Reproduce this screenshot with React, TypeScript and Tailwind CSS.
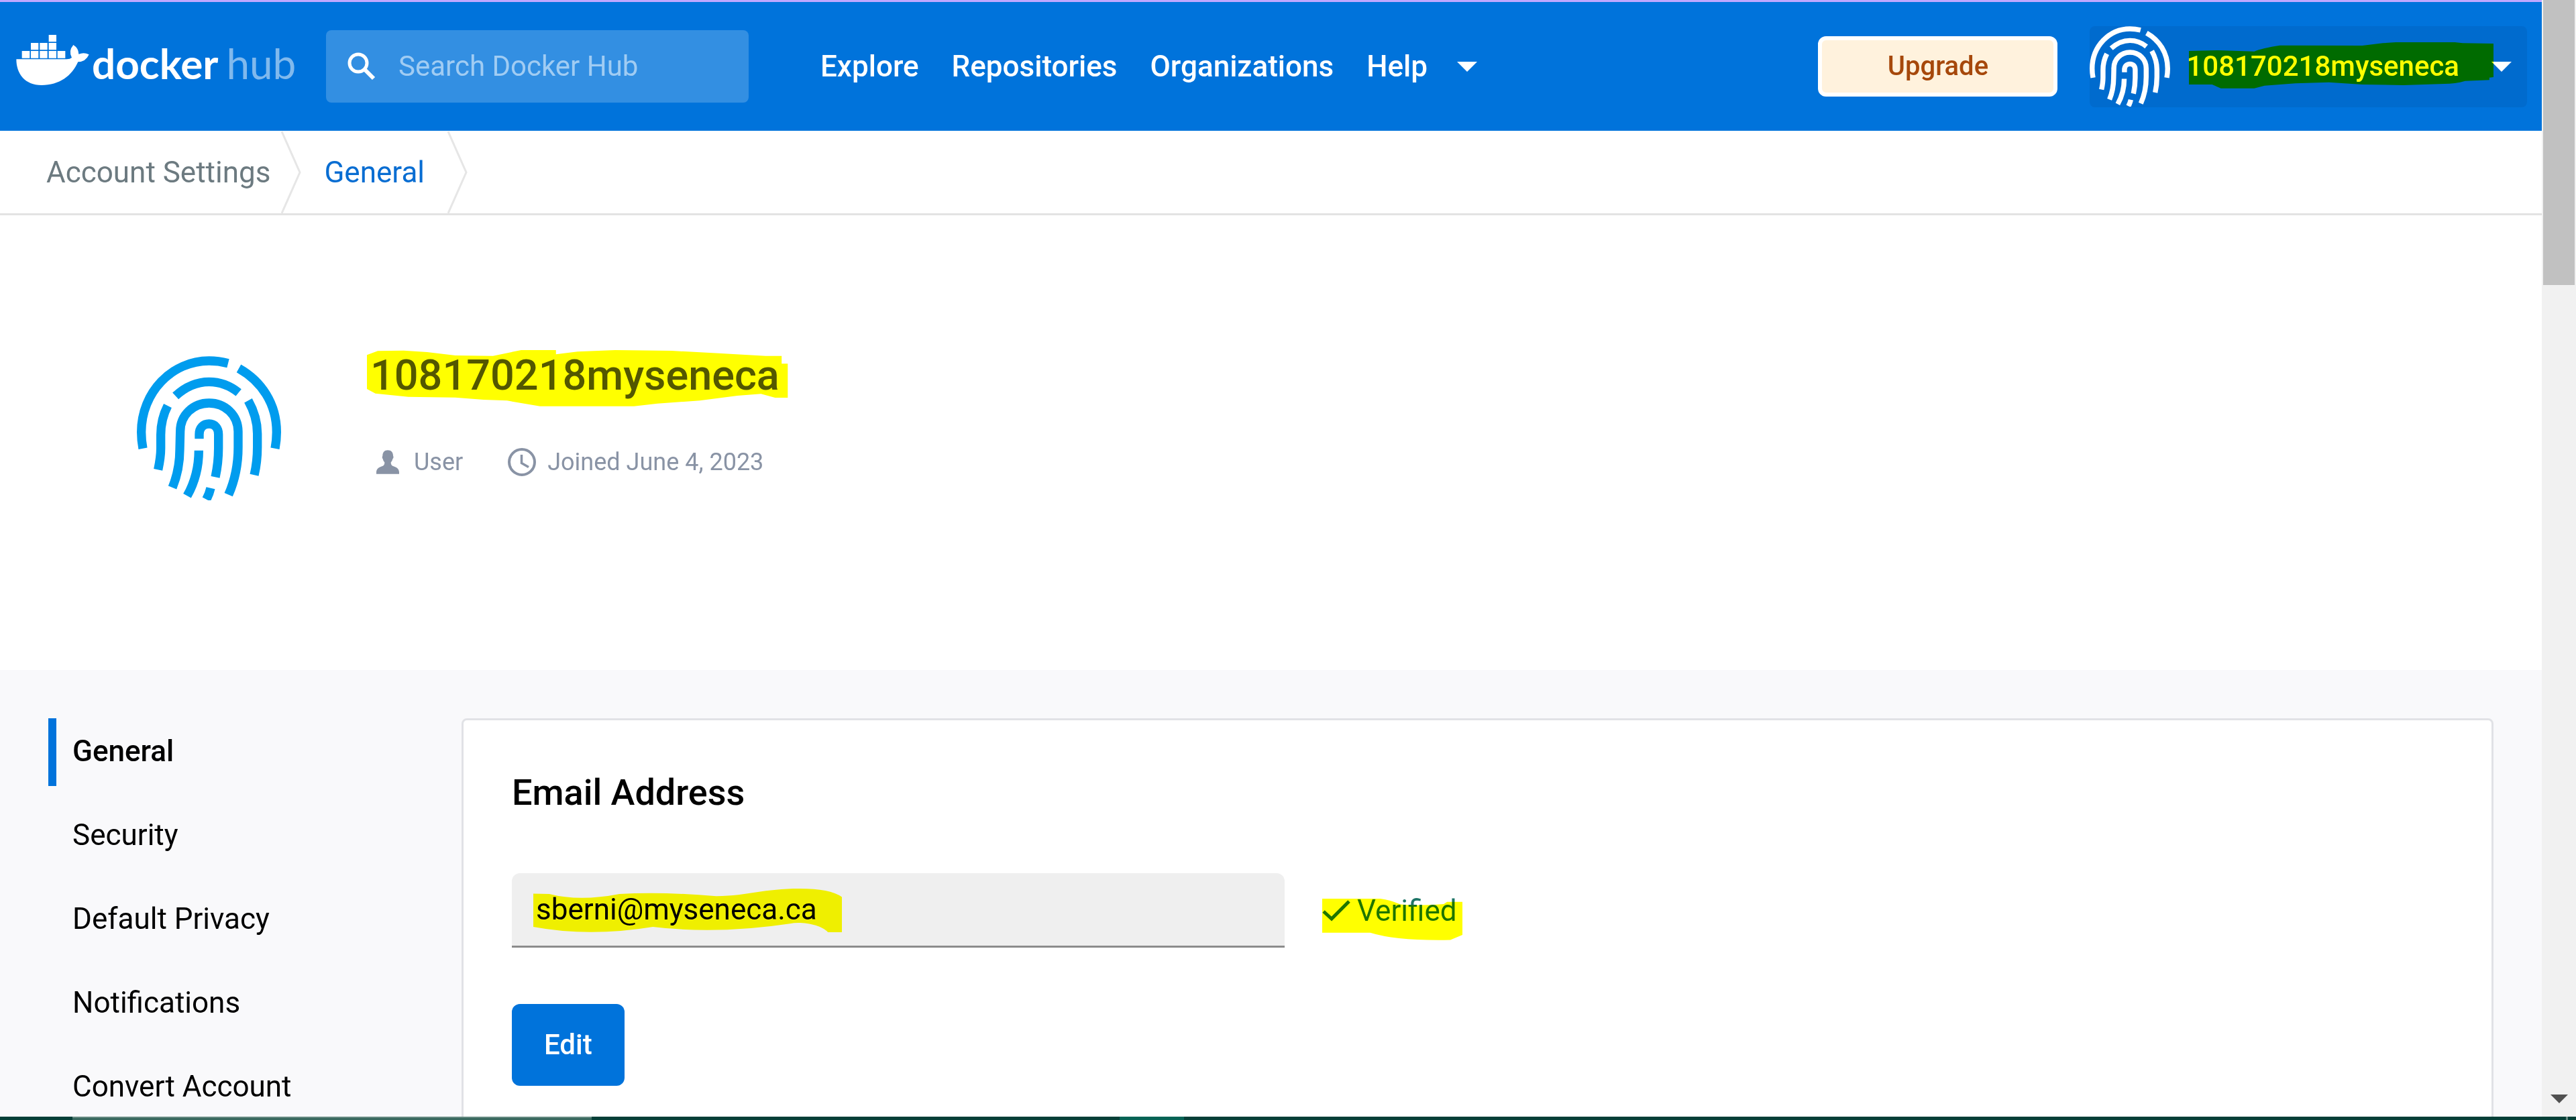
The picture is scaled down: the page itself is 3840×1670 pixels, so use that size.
import type { ReactNode } from "react";

const navLinks = ["Explore", "Repositories", "Organizations"];
const settings = ["General", "Security", "Default Privacy", "Notifications", "Convert Account"];

function Fingerprint({ className }: { className: string }) {
  return (
    <svg viewBox="43 48 645 645" className={className} fill="none" stroke="currentColor" strokeWidth="40" aria-hidden="true">
      <path d="M70 461 Q63 425 63 388 C63 210 200 69 366 69 Q408 69 451 80" />
      <path d="M499 103 C600 160 668 260 668 388 Q668 425 661 461" />
      <path d="M216 226 Q285 163 366 163 Q438 163 498 211" />
      <path d="M202 636 Q235 555 235 465 L237 385 C237 312 295 258 366 258 C438 258 495 312 496 385 L496 455 Q496 570 453 668" />
      <path d="M322 418 L322 398 C322 369 340 351 366 351 C392 351 408 370 408 398 V460 Q408 525 394 589" />
      <path d="M320 470 Q320 580 268 673" />
      <path d="M373 638 Q367 664 354 689" />
      <path d="M181 270 Q150 330 150 400 V460 Q150 500 138 556" />
      <path d="M541 247 Q582 320 582 395 V455 Q582 520 568 580" />
    </svg>
  );
}

function Whale() {
  return (
    <svg viewBox="42 66 325 225" className="h-[75px] w-[109px]" fill="currentColor" aria-hidden="true">
      <path d="M187 66h34v31h-34zM107 102h34v31h-34zM147 102h34v31h-34zM187 102h34v31h-34zM67 138h35v32H67zM107 138h34v32h-34zM147 138h34v32h-34zM187 138h34v32h-34zM226 138h35v32h-35z" />
      <path d="M42 175H268Q282 175 290 168Q274 138 297 111Q320 125 321 152Q345 142 367 154Q352 187 318 187C290 250 235 291 155 291C80 291 42 240 42 175Z" />
    </svg>
  );
}

function Caret() {
  return (
    <svg viewBox="0 0 30 15" className="h-[15px] w-[30px]" fill="currentColor" aria-hidden="true">
      <path d="M0 0H30L15 15Z" />
    </svg>
  );
}

function CrumbArrow() {
  return (
    <svg viewBox="0 0 30 123" className="h-[123px] w-[30px]" fill="none" stroke="#e6e6e6" strokeWidth="3" aria-hidden="true">
      <path d="M1 1L28 62L1 123" />
    </svg>
  );
}

function Marker({ viewBox, d, className }: { viewBox: string; d: string; className: string }) {
  return (
    <svg
      viewBox={viewBox}
      preserveAspectRatio="none"
      className={`pointer-events-none absolute mix-blend-multiply ${className}`}
      fill="#ffff00"
      aria-hidden="true"
    >
      <path d={d} />
    </svg>
  );
}

function Header() {
  return (
    <header className="flex h-[195px] shrink-0 items-center border-t-[3px] border-[#c0a8ff] bg-[#0073db] pr-[22px] pl-6 text-[42px] leading-[48px] font-medium text-white">
      <a href="#home" aria-label="docker hub" className="flex h-[108px] w-[462px] shrink-0 items-start pt-[7px]">
        <Whale />
        <span className="mt-3 ml-1 flex gap-3 font-['Lato',sans-serif] text-[62px] leading-[60px]">
          <span className="font-bold">docker</span>
          <span className="font-normal text-[#80b9ed]">hub</span>
        </span>
      </a>
      <label className="flex h-[108px] w-[630px] items-center rounded-lg bg-[#338fe2] pl-8">
        <svg viewBox="0 0 42 42" className="size-[42px] shrink-0" fill="none" stroke="currentColor" strokeWidth="5" aria-hidden="true">
          <circle cx="16" cy="16" r="13" />
          <path d="M25 25L39 39" strokeWidth="6" />
        </svg>
        <input
          type="search"
          aria-label="Search Docker Hub"
          placeholder="Search Docker Hub"
          className="ml-[34px] min-w-0 flex-1 bg-transparent font-normal outline-none placeholder:text-[#a0ccf3]"
        />
      </label>
      <nav className="ml-[107px] flex items-center gap-[49px] text-[44px]">
        {navLinks.map((link) => (
          <a key={link} href={`#${link.toLowerCase()}`}>{link}</a>
        ))}
        <button type="button" className="flex items-center gap-11">
          Help
          <Caret />
        </button>
      </nav>
      <div className="ml-auto flex items-center gap-12">
        <button type="button" className="h-[90px] w-[357px] rounded-xl border-[6px] border-white bg-[#fff2dd] text-[40px] text-[#a6480b]">
          Upgrade
        </button>
        <button type="button" className="relative flex h-[121px] items-center rounded-lg bg-[#006bce] pr-[23px]">
          <Fingerprint className="size-[120px]" />
          <span className="ml-6">108170218myseneca</span>
          <span className="ml-12"><Caret /></span>
          <Marker
            className="top-[24px] right-[50px] h-[69px] w-[454px]"
            viewBox="813 189 592 207"
            d="M813 228L870 225L940 230Q955 215 990 203L1150 204L1190 193L1215 189H1330L1345 193L1405 195V345L1397 347V358L1350 362Q1330 375 1310 375L1230 381L1150 378L1085 368L1020 373L960 383L940 395H875L858 378H813Z"
          />
        </button>
      </div>
    </header>
  );
}

function Breadcrumbs() {
  return (
    <nav aria-label="Breadcrumb" className="flex h-[126px] shrink-0 items-center border-b-[3px] border-[#e3e3e3] pl-[69px] text-[44px] leading-[48px]">
      <a href="#account" className="mr-4 text-[#6c7a80]">Account Settings</a>
      <CrumbArrow />
      <a href="#general" className="mr-[34px] ml-[34px] text-[#086dd2]">General</a>
      <CrumbArrow />
    </nav>
  );
}

function Profile() {
  return (
    <section className="flex h-[678px] shrink-0 items-start pt-[203px] pl-[204px]">
      <Fingerprint className="mt-[7px] size-[215px] text-[#009cee]" />
      <div className="ml-[133px]">
        <h1 className="relative text-[63px] leading-[72px] font-medium text-[#535760]">
          108170218myseneca
          <Marker
            className="-top-0.5 -left-[5px] h-[84px] w-[628px]"
            viewBox="552 126 896 252"
            d="M552 148L575 130L630 128L680 135L740 150L820 152L880 126H954V145L1000 133L1080 126L1200 129L1300 140L1400 152H1434V187H1447V339H1420L1390 322L1340 330L1260 352L1170 365L1120 377H920L850 352L800 348L740 338L640 335L570 320L552 300Z"
          />
        </h1>
        <div className="mt-[71px] flex items-center text-[36px] leading-[44px] text-[#8993a5]">
          <svg viewBox="33 57 102 107" className="ml-[9px] h-9 w-[34px]" fill="currentColor" aria-hidden="true">
            <path d="M84 57C100 57 108 67 108 82Q112 92 106 96Q104 107 98 112Q98 124 106 128C122 133 135 140 135 157V164H33V157C33 140 46 133 62 128Q70 124 70 112Q64 107 62 96Q57 92 61 82C61 67 69 57 84 57Z" />
          </svg>
          <span className="ml-[22px]">User</span>
          <svg viewBox="0 0 44 44" className="ml-[66px] size-11" fill="none" stroke="currentColor" strokeWidth="4" aria-hidden="true">
            <circle cx="22" cy="22" r="19" />
            <path d="M21.500 11V23.500L32 29.500" strokeWidth="3.500" />
          </svg>
          <span className="ml-4">Joined June 4, 2023</span>
        </div>
      </div>
    </section>
  );
}

function Sidebar() {
  return (
    <nav aria-label="Settings" className="flex w-[616px] shrink-0 flex-col gap-6 text-[44px] leading-[48px] text-black">
      {settings.map((item, i) => (
        <a
          key={item}
          href={`#${item.toLowerCase().replace(" ", "-")}`}
          aria-current={i === 0 ? "page" : undefined}
          className={`flex h-[101px] items-center border-l-[12px] pb-1 pl-6 ${i === 0 ? "border-[#0073db] font-medium" : "border-transparent"}`}
        >
          {item}
        </a>
      ))}
    </nav>
  );
}

function EmailCard() {
  return (
    <section className="min-h-[700px] flex-1 rounded-lg border-[3px] border-[#e1e2e6] bg-white px-[72px] pt-[78px]">
      <h2 className="text-[54px] leading-[60px] font-medium text-black">Email Address</h2>
      <div className="mt-[90px] flex items-center text-[44px] leading-[48px]">
        <div className="relative w-[1152px]">
          <input
            type="email"
            aria-label="Email Address"
            readOnly
            value="sberni@myseneca.ca"
            className="block h-[111px] w-full rounded-t-xl border-b-[3px] border-[#8c8c8c] bg-[#efefef] px-9 text-black outline-none"
          />
          <Marker
            className="top-[23px] left-8 h-[65px] w-[460px]"
            viewBox="116 709 462 162"
            d="M116 728L140 729Q185 758 245 729Q310 720 390 737C440 735 460 709 515 709Q560 709 578 740V871H557C548 845 520 830 500 839Q390 880 295 851Q200 890 116 851Z"
          />
        </div>
        <div className="relative ml-14 flex items-center text-[#1e7567]">
          <svg viewBox="0 0 42 32" className="mr-2.5 h-8 w-[42px]" fill="none" stroke="currentColor" strokeWidth="5" aria-hidden="true">
            <path d="M2 17L14 28L40 2" />
          </svg>
          Verified
          <Marker
            className="top-1.5 left-0 h-[62px] w-[209px]"
            viewBox="1298 747 210 155"
            d="M1298 747H1385Q1400 752 1415 768Q1440 775 1480 767L1485 759H1508V882L1490 901Q1410 905 1370 874H1298Z"
          />
        </div>
      </div>
      <button type="button" className="mt-[84px] h-[122px] rounded-xl bg-[#0073db] px-12 text-[42px] leading-[48px] font-medium text-white">
        Edit
      </button>
    </section>
  );
}

function Scrollbar() {
  return (
    <div className="flex w-[51px] shrink-0 flex-col items-center bg-[#f1f1f1]" aria-hidden="true">
      <div className="h-[425px] w-[47px] bg-[#c1c1c1]" />
      <svg viewBox="0 0 26 13" className="mt-auto mb-5 h-[13px] w-[26px]" fill="#505050">
        <path d="M0 0H26L13 13Z" />
      </svg>
    </div>
  );
}

function Taskbar() {
  return (
    <div className="flex h-[5px] shrink-0 bg-[#053f37]" aria-hidden="true">
      <div className="ml-[108px] w-[774px] border-t-2 border-[#648880] bg-[#37685e]" />
      <div className="ml-[787px] w-24 bg-[#066355]" />
      <div className="mr-3 ml-auto w-[3px] bg-[#648880]" />
    </div>
  );
}

function Page({ children }: { children: ReactNode }) {
  return <div className="flex h-screen flex-col overflow-hidden bg-white font-['Roboto',sans-serif]">{children}</div>;
}

export default function App() {
  return (
    <Page>
      <div className="flex min-h-0 flex-1">
        <div className="flex min-w-0 flex-1 flex-col overflow-hidden">
          <Header />
          <Breadcrumbs />
          <main className="flex min-h-0 flex-1 flex-col">
            <Profile />
            <div className="flex items-start bg-[#f9f9fb] p-[72px] pb-0">
              <Sidebar />
              <EmailCard />
            </div>
          </main>
        </div>
        <Scrollbar />
      </div>
      <Taskbar />
    </Page>
  );
}
